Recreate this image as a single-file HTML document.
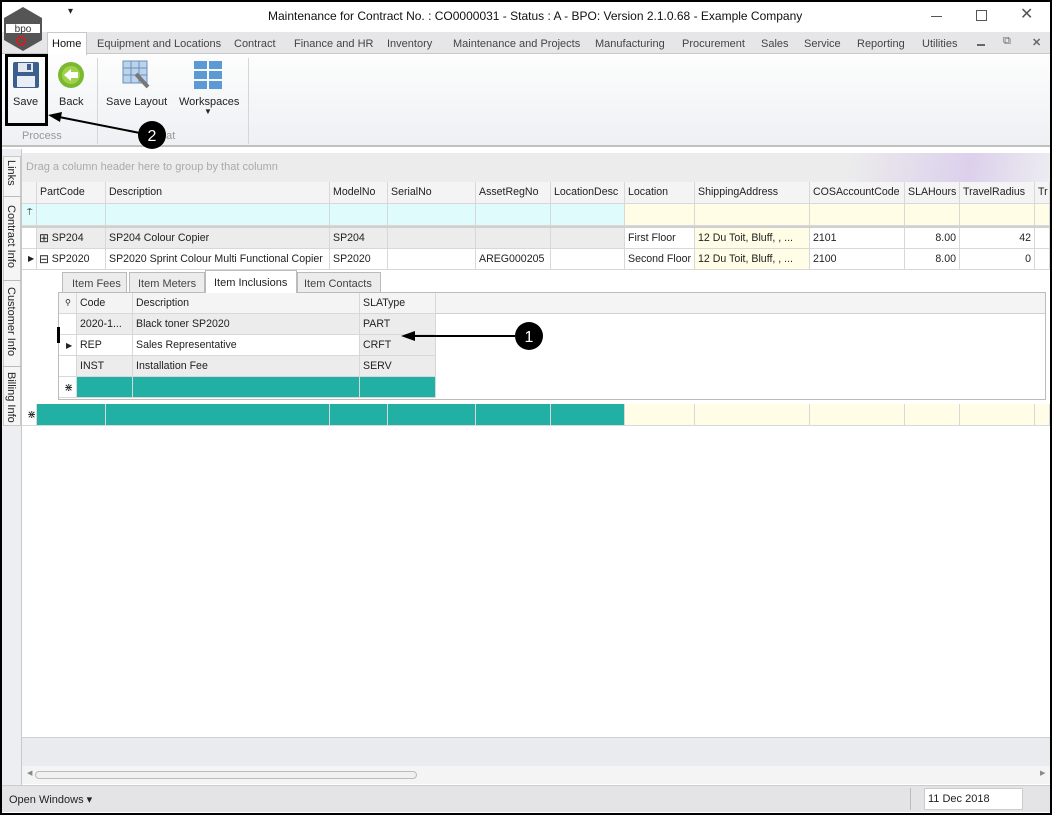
<!DOCTYPE html>
<html><head><style>
*{margin:0;padding:0;box-sizing:border-box}
body{width:1052px;height:815px;background:#000;font-family:"Liberation Sans",sans-serif;font-size:11px;color:#222;position:relative;overflow:hidden}
.a{position:absolute}
.t{position:absolute;white-space:nowrap}
.c{position:absolute;border-right:1px solid #d8d8d8;border-bottom:1px solid #d8d8d8;padding:4px 3px 0;white-space:nowrap;overflow:hidden;height:21px;font-size:10.6px}
.tb{position:absolute;top:38px;font-size:11px;color:#444;white-space:nowrap}
</style></head><body>
<div class="a" style="left:2px;top:2px;width:1048px;height:811px;background:#fff"></div>
<div class="t" style="left:268px;top:9px;font-size:12px;color:#111">Maintenance for Contract No. : CO0000031 - Status : A - BPO: Version 2.1.0.68 - Example Company</div>
<div class="t" style="left:68px;top:6px;font-size:10px">▾</div>
<div class="a" style="left:931px;top:16px;width:11px;height:1px;background:#555"></div>
<div class="a" style="left:976px;top:10px;width:11px;height:11px;border:1px solid #555"></div>
<div class="t" style="left:1020px;top:4px;font-size:16px;color:#555">✕</div>
<div class="a" style="left:2px;top:32px;width:1048px;height:22px;background:#e6e6e8;border-bottom:1px solid #c8c8c8"></div>
<div class="a" style="left:47px;top:32px;width:40px;height:23px;background:#fff;border:1px solid #c8c8c8;border-bottom:none"></div>
<div class="tb" style="left:52px;color:#111">Home</div>
<div class="tb" style="left:97px">Equipment and Locations</div>
<div class="tb" style="left:234px">Contract</div>
<div class="tb" style="left:294px">Finance and HR</div>
<div class="tb" style="left:387px">Inventory</div>
<div class="tb" style="left:453px">Maintenance and Projects</div>
<div class="tb" style="left:595px">Manufacturing</div>
<div class="tb" style="left:682px">Procurement</div>
<div class="tb" style="left:761px">Sales</div>
<div class="tb" style="left:804px">Service</div>
<div class="tb" style="left:857px">Reporting</div>
<div class="tb" style="left:922px">Utilities</div>
<div class="a" style="left:977px;top:44px;width:8px;height:2px;background:#666"></div>
<div class="t" style="left:1003px;top:35px;font-size:11px;color:#666">⧉</div>
<div class="t" style="left:1032px;top:36px;font-size:11px;color:#666;font-weight:bold">✕</div>
<svg class="a" style="left:2px;top:6px" width="42" height="46"><polygon points="21,1 40,12 40,34 21,45 2,34 2,12" fill="#555"/><rect x="4" y="18" width="34" height="9" fill="#fff"/><text x="21" y="26" font-size="10" text-anchor="middle" fill="#333" font-family="Liberation Sans">bpo</text><circle cx="19" cy="35" r="4" fill="none" stroke="#c22" stroke-width="2"/></svg>
<div class="a" style="left:2px;top:55px;width:1048px;height:92px;background:linear-gradient(#fdfdfd,#eef0f3);border-bottom:2px solid #c0c0c0"></div>
<div class="a" style="left:97px;top:58px;width:1px;height:86px;background:#d6d6d6"></div>
<div class="a" style="left:248px;top:58px;width:1px;height:86px;background:#d6d6d6"></div>
<svg class="a" style="left:12px;top:61px" width="28" height="28"><rect x="1" y="1" width="26" height="26" rx="2" fill="#3d5f8e"/><rect x="6" y="2" width="15" height="9" fill="#e4e8ee"/><rect x="15" y="3" width="4" height="6" fill="#3d5f8e"/><rect x="5" y="15" width="18" height="11" fill="#e8eef6"/></svg>
<svg class="a" style="left:57px;top:61px" width="28" height="28"><circle cx="14" cy="14" r="13" fill="#7ab82f"/><circle cx="14" cy="14" r="9" fill="#9fd24a"/><polygon points="7,14 14,8 14,11 21,11 21,17 14,17 14,20" fill="#fff"/></svg>
<svg class="a" style="left:122px;top:60px" width="30" height="30"><rect x="1" y="1" width="24" height="22" fill="#bcd3ec" stroke="#6a8fb8"/><path d="M1 8h24M1 15h24M9 1v22M17 1v22" stroke="#6a8fb8"/><path d="M14 14l12 13" stroke="#777" stroke-width="4"/></svg>
<svg class="a" style="left:193px;top:60px" width="30" height="30"><g fill="#5c9ad6"><rect x="1" y="1" width="13" height="8"/><rect x="16" y="1" width="13" height="8"/><rect x="1" y="11" width="13" height="8"/><rect x="16" y="11" width="13" height="8"/><rect x="1" y="21" width="13" height="8"/><rect x="16" y="21" width="13" height="8"/></g></svg>
<div class="t" style="left:13px;top:96px;font-size:11px">Save</div>
<div class="t" style="left:59px;top:96px;font-size:11px">Back</div>
<div class="t" style="left:106px;top:96px;font-size:11px">Save Layout</div>
<div class="t" style="left:179px;top:96px;font-size:11px">Workspaces</div>
<div class="t" style="left:204px;top:107px;font-size:8px">▼</div>
<div class="t" style="left:22px;top:130px;font-size:11px;color:#999">Process</div>
<div class="t" style="left:160px;top:130px;font-size:11px;color:#999">nat</div>
<div class="a" style="left:5px;top:54px;width:43px;height:72px;border:3px solid #000"></div>
<svg class="a" style="left:30px;top:110px" width="150" height="40"><line x1="115" y1="24" x2="24" y2="6" stroke="#000" stroke-width="2"/><polygon points="18,5 32,2 30,12" fill="#000"/><circle cx="122" cy="25" r="14" fill="#000"/><text x="122" y="31" font-size="16" fill="#fff" text-anchor="middle" font-family="Liberation Sans">2</text></svg>
<div class="a" style="left:2px;top:149px;width:20px;height:636px;background:#eceef1;border-right:1px solid #c8c8c8"></div>
<div class="a" style="left:3px;top:156px;width:18px;height:270px;background:#f5f5f5;border:1px solid #c8c8c8"></div>
<div class="t" style="left:5px;top:160px;font-size:11px;writing-mode:vertical-rl">Links</div>
<div class="a" style="left:3px;top:196px;width:18px;height:1px;background:#bbb"></div>
<div class="t" style="left:5px;top:205px;font-size:11px;writing-mode:vertical-rl">Contract Info</div>
<div class="a" style="left:3px;top:280px;width:18px;height:1px;background:#bbb"></div>
<div class="t" style="left:5px;top:287px;font-size:11px;writing-mode:vertical-rl">Customer Info</div>
<div class="a" style="left:3px;top:366px;width:18px;height:1px;background:#bbb"></div>
<div class="t" style="left:5px;top:372px;font-size:11px;writing-mode:vertical-rl">Billing Info</div>
<div class="a" style="left:22px;top:153px;width:1028px;height:29px;background:linear-gradient(100deg,#ececec 80%,#dcd0ec 92%,#ececf0)"></div>
<div class="t" style="left:26px;top:161px;font-size:11px;color:#aaa">Drag a column header here to group by that column</div>
<div class="a" style="left:22px;top:182px;width:1028px;height:555px;background:#fff"></div>
<div class="a" style="left:22px;top:182px;width:1028px;height:22px;background:#f4f4f4"></div>
<div class="a" style="left:22px;top:204px;width:603px;height:22px;background:#e0fbfc"></div>
<div class="a" style="left:625px;top:204px;width:425px;height:22px;background:#fffde6"></div>
<div class="a" style="left:22px;top:226px;width:1028px;height:2px;background:#d0d0d0"></div>
<div class="a" style="left:37px;top:228px;width:588px;height:21px;background:#ececec"></div>
<div class="a" style="left:695px;top:228px;width:115px;height:42px;background:#fffde6"></div>
<div class="a" style="left:37px;top:404px;width:588px;height:22px;background:#22b0a4"></div>
<div class="a" style="left:625px;top:404px;width:425px;height:22px;background:#fffde6"></div>
<div id="g"></div>
<div class="t" style="left:27px;top:207px;font-size:9px">⍑</div>
<div class="t" style="left:27px;top:408px;font-size:11px">⋇</div>
<div class="t" style="left:28px;top:254px;font-size:8px">▶</div>
<div class="t" style="left:39px;top:231px;font-size:12px">⊞</div>
<div class="t" style="left:39px;top:252px;font-size:12px">⊟</div>
<div class="a" style="left:58px;top:292px;width:988px;height:108px;border:1px solid #bbb;background:#fff"></div>
<div class="a" style="left:59px;top:293px;width:986px;height:21px;background:#f4f4f4;border-bottom:1px solid #d0d0d0"></div>
<div class="a" style="left:77px;top:314px;width:283px;height:21px;background:#ececec"></div>
<div class="a" style="left:77px;top:356px;width:283px;height:21px;background:#ececec"></div>
<div class="a" style="left:360px;top:314px;width:76px;height:63px;background:#ececec"></div>
<div class="a" style="left:77px;top:377px;width:359px;height:21px;background:#22b0a4"></div>
<div class="a" style="left:62px;top:272px;width:65px;height:21px;background:#ececec;border:1px solid #bbb"></div>
<div class="a" style="left:129px;top:272px;width:76px;height:21px;background:#ececec;border:1px solid #bbb"></div>
<div class="a" style="left:205px;top:270px;width:92px;height:23px;background:#fff;border:1px solid #bbb;border-bottom:none"></div>
<div class="a" style="left:297px;top:272px;width:84px;height:21px;background:#ececec;border:1px solid #bbb"></div>
<div class="t" style="left:72px;top:278px;font-size:11px;color:#444">Item Fees</div>
<div class="t" style="left:138px;top:278px;font-size:11px;color:#444">Item Meters</div>
<div class="t" style="left:214px;top:277px;font-size:11px">Item Inclusions</div>
<div class="t" style="left:304px;top:278px;font-size:11px;color:#444">Item Contacts</div>
<div id="d"></div>
<div class="t" style="left:65px;top:298px;font-size:8px">⚲</div>
<div class="t" style="left:66px;top:341px;font-size:8px">▶</div>
<div class="t" style="left:64px;top:381px;font-size:11px">⋇</div>
<div class="a" style="left:57px;top:327px;width:3px;height:16px;background:#000"></div>
<svg class="a" style="left:395px;top:320px" width="160" height="32"><line x1="120" y1="16" x2="16" y2="16" stroke="#000" stroke-width="2"/><polygon points="6,16 20,11 20,21" fill="#000"/><circle cx="134" cy="16" r="14" fill="#000"/><text x="134" y="22" font-size="16" fill="#fff" text-anchor="middle" font-family="Liberation Sans">1</text></svg>
<div class="a" style="left:22px;top:737px;width:1028px;height:29px;background:#eaebee;border-top:1px solid #d0d0d0"></div>
<div class="a" style="left:22px;top:766px;width:1028px;height:18px;background:#f4f4f4"></div>
<div class="a" style="left:35px;top:771px;width:382px;height:8px;border:1px solid #bbb;border-radius:4px;background:#f0f0f0"></div>
<div class="t" style="left:27px;top:769px;font-size:7px;color:#888">◀</div>
<div class="t" style="left:1040px;top:769px;font-size:7px;color:#888">▶</div>
<div class="a" style="left:2px;top:785px;width:1048px;height:27px;background:#e4e4e6;border-top:1px solid #ccc"></div>
<div class="t" style="left:9px;top:793px;font-size:11px">Open Windows ▾</div>
<div class="a" style="left:910px;top:788px;width:1px;height:22px;background:#bbb"></div>
<div class="a" style="left:924px;top:788px;width:99px;height:22px;background:#fff;border:1px solid #ccc"></div>
<div class="t" style="left:928px;top:793px;font-size:11px">11 Dec 2018</div>
<script>
function cells(host,xs,y,h,vals,style){let s='';for(let i=0;i<xs.length-1;i++){const v=vals[i]||'';const r=style&&style[i]?style[i]:'';s+=`<div class="c" style="left:${xs[i]}px;top:${y}px;width:${xs[i+1]-xs[i]}px;height:${h}px;${r}">${v}</div>`}document.getElementById(host).innerHTML+=s}
const X=[22,37,106,330,388,476,551,625,695,810,905,960,1035,1050];
cells('g',X,182,22,['','PartCode','Description','ModelNo','SerialNo','AssetRegNo','LocationDesc','Location','ShippingAddress','COSAccountCode','SLAHours','TravelRadius','Tr']);
cells('g',X,204,22,[]);
const R={10:'text-align:right',11:'text-align:right'};
cells('g',X,228,21,['','&nbsp;&nbsp;&nbsp;&nbsp;SP204','SP204 Colour Copier','SP204','','','','First Floor','12 Du Toit, Bluff, , ...','2101','8.00','42',''],R);
cells('g',X,249,21,['','&nbsp;&nbsp;&nbsp;&nbsp;SP2020','SP2020 Sprint Colour Multi Functional Copier','SP2020','','AREG000205','','Second Floor','12 Du Toit, Bluff, , ...','2100','8.00','0',''],R);
cells('g',X,404,22,[]);
const D=[59,77,133,360,436];
cells('d',D,293,21,['','Code','Description','SLAType']);
cells('d',D,314,21,['','2020-1...','Black toner SP2020','PART']);
cells('d',D,335,21,['','REP','Sales Representative','CRFT']);
cells('d',D,356,21,['','INST','Installation Fee','SERV']);
cells('d',D,377,21,[]);
</script>
</body></html>
